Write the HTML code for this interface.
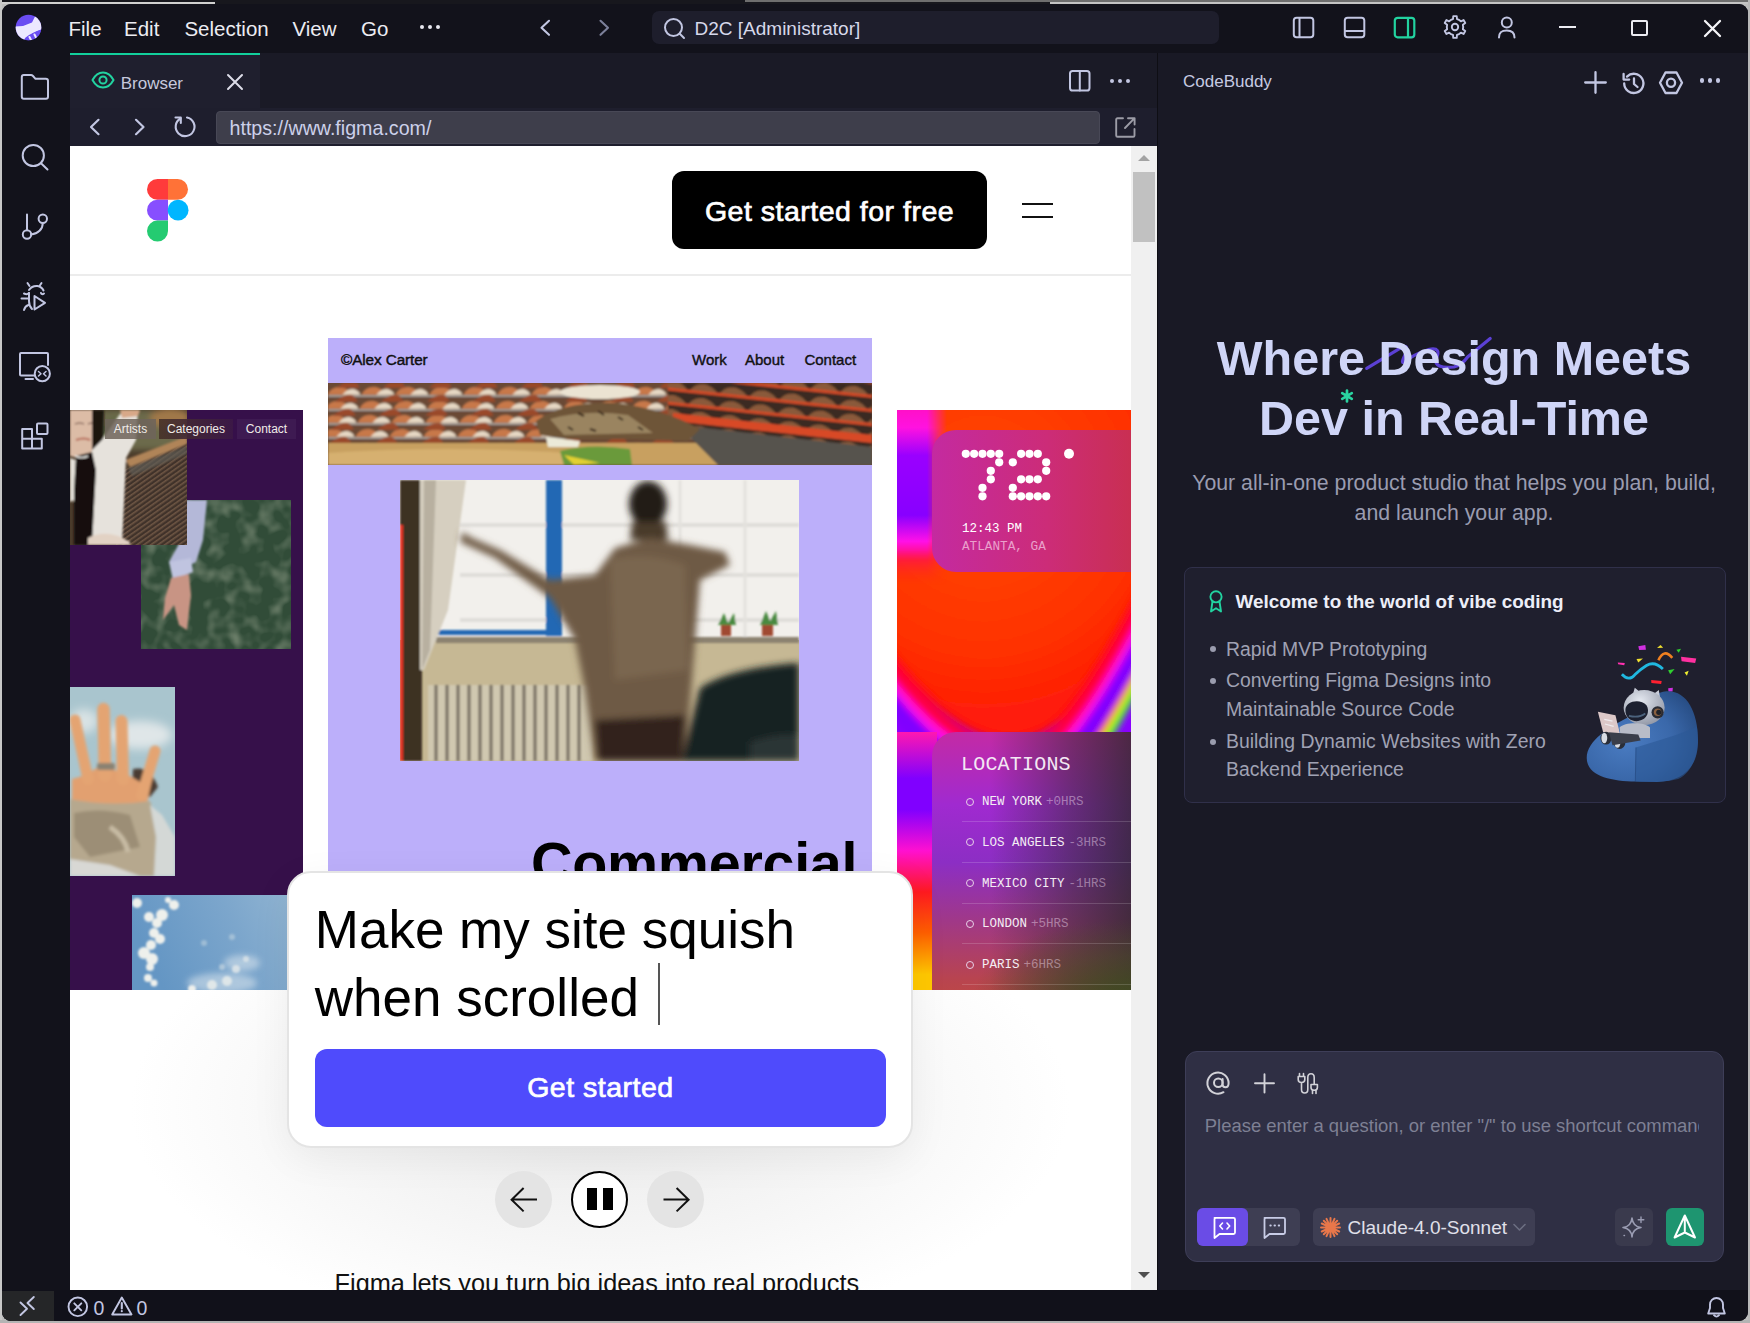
<!DOCTYPE html>
<html><head><meta charset="utf-8">
<style>
*{margin:0;padding:0;box-sizing:border-box}
html,body{width:1750px;height:1323px;overflow:hidden;background:#bdbdbd;font-family:"Liberation Sans",sans-serif}
.a{position:absolute}
.t{white-space:pre;line-height:normal}
</style></head><body>
<div class="a" style="left:0;top:0;width:1750px;height:4px;background:#17171d"></div>
<div class="a" style="left:0;top:2px;width:215px;height:2px;background:#d0d0d0"></div>
<div class="a" style="left:745px;top:0;width:1005px;height:2px;background:#6e6e6e"></div>
<div class="a" style="left:1050px;top:2px;width:700px;height:2px;background:#c4c4c4"></div>
<div class="a" style="left:0;top:0;width:2px;height:1323px;background:#c8c8c8"></div>
<div class="a" style="left:1748px;top:0;width:2px;height:1323px;background:#b8b8b8"></div>
<div class="a" style="left:0;top:1320px;width:1750px;height:3px;background:#b4b4b4"></div>
<div class="a" style="left:2px;top:4px;width:1746px;height:1316.5px;border-radius:9px;overflow:hidden;background:#12121b">
<div class="a" style="left:-2px;top:-4px;width:1750px;height:1323px">
<div class="a" style="left:0;top:0;width:1750px;height:53px;background:#12121b"></div><svg class="a" style="left:15px;top:14px" width="28" height="28" viewBox="0 0 28 28">
    <defs><clipPath id="lc"><circle cx="13.5" cy="13.5" r="12.8"/></clipPath></defs>
    <circle cx="13.5" cy="13.5" r="12.8" fill="#6a4cf2"/>
    <g clip-path="url(#lc)">
      <path d="M-2 12.5 L8 12 L17 8.5 L20 2.5 L30 6 L30 14 L22 17 L14 21 L10 24 L8 30 L-2 30Z" fill="#ece8ff"/>
      <path d="M9 30 L11 24 L18 19 L30 14 L30 30Z" fill="#6a4cf2"/>
      <path d="M14.5 23 L16 26 M19.5 20.5 L21 23.5" stroke="#ece8ff" stroke-width="2" stroke-linecap="round"/>
    </g></svg><div class="a t" style="left:68.50px;top:16.74px;font-size:20.5px;color:#ececf2;">File</div><div class="a t" style="left:124.00px;top:16.74px;font-size:20.5px;color:#ececf2;">Edit</div><div class="a t" style="left:184.40px;top:16.74px;font-size:20.5px;color:#ececf2;">Selection</div><div class="a t" style="left:292.40px;top:16.74px;font-size:20.5px;color:#ececf2;">View</div><div class="a t" style="left:361.00px;top:16.74px;font-size:20.5px;color:#ececf2;">Go</div><div class="a" style="left:420.30px;top:25.20px;width:4.2px;height:4.2px;border-radius:50%;background:#e8e8f0"></div><div class="a" style="left:428.30px;top:25.20px;width:4.2px;height:4.2px;border-radius:50%;background:#e8e8f0"></div><div class="a" style="left:436.30px;top:25.20px;width:4.2px;height:4.2px;border-radius:50%;background:#e8e8f0"></div><svg class="a" style="left:536px;top:18px;overflow:visible" width="18" height="20" fill="none" stroke="#c2c6e2" stroke-width="2.1" stroke-linecap="round" stroke-linejoin="round"><path d="M13 2.8 L5.5 9.8 L13 16.8"/></svg><svg class="a" style="left:596px;top:18px;overflow:visible" width="18" height="20" fill="none" stroke="#7c809a" stroke-width="2.1" stroke-linecap="round" stroke-linejoin="round"><path d="M4.5 2.8 L12 9.8 L4.5 16.8"/></svg><div class="a" style="left:652px;top:11px;width:567px;height:33px;background:#1e1e2c;border-radius:7px"></div><svg class="a" style="left:662px;top:16px;overflow:visible" width="26" height="26" fill="none" stroke="#c2c6e2" stroke-width="2" stroke-linecap="round" stroke-linejoin="round"><circle cx="11.5" cy="11.5" r="8.5"/><path d="M18 18 L22 22"/></svg><div class="a t" style="left:694.50px;top:17.52px;font-size:19px;color:#d6d8ea;">D2C [Administrator]</div><svg class="a" style="left:1292px;top:16px;overflow:visible" width="23" height="23" fill="none" stroke="#c2c6e2" stroke-width="2" stroke-linecap="round" stroke-linejoin="round"><rect x="1.8" y="1.8" width="19.5" height="19.5" rx="2.8"/><path d="M7.5 2 V21"/></svg><svg class="a" style="left:1343px;top:16px;overflow:visible" width="23" height="23" fill="none" stroke="#c2c6e2" stroke-width="2" stroke-linecap="round" stroke-linejoin="round"><rect x="1.8" y="1.8" width="19.5" height="19.5" rx="2.8"/><path d="M2 15 H21"/></svg><svg class="a" style="left:1393px;top:16px;overflow:visible" width="23" height="23" fill="none" stroke="#22d3a0" stroke-width="2.2" stroke-linecap="round" stroke-linejoin="round"><rect x="1.8" y="1.8" width="19.5" height="19.5" rx="2.8"/><path d="M15 2 V21"/></svg><svg class="a" style="left:1444px;top:16.4px;overflow:visible" width="22" height="22" fill="none" stroke="#c2c6e2" stroke-width="1.9" stroke-linecap="round" stroke-linejoin="round"><path d="M6.90 3.90 L9.02 3.04 L9.28 0.14 L12.72 0.14 L12.98 3.04 L15.10 3.90 L16.90 5.30 L19.55 4.08 L21.27 7.06 L18.88 8.74 L19.20 11.00 L18.88 13.26 L21.27 14.94 L19.55 17.92 L16.90 16.70 L15.10 18.10 L12.98 18.96 L12.72 21.86 L9.28 21.86 L9.02 18.96 L6.90 18.10 L5.10 16.70 L2.45 17.92 L0.73 14.94 L3.12 13.26 L2.80 11.00 L3.12 8.74 L0.73 7.06 L2.45 4.08 L5.10 5.30Z"/><circle cx="11" cy="11" r="3.2"/></svg><svg class="a" style="left:1497px;top:16px;overflow:visible" width="20" height="23" fill="none" stroke="#c2c6e2" stroke-width="2" stroke-linecap="round" stroke-linejoin="round"><circle cx="9.8" cy="6.4" r="5"/><path d="M2 21.5 C2 15.5 5.5 14.5 9.8 14.5 C14 14.5 17.5 15.5 17.5 21.5"/></svg><div class="a" style="left:1559px;top:26px;width:16.5px;height:2px;background:#ececf2"></div><div class="a" style="left:1631px;top:19.5px;width:17px;height:16.5px;border:2px solid #ececf2;border-radius:2px"></div><svg class="a" style="left:1704px;top:19.5px;overflow:visible" width="17" height="17" fill="none" stroke="#f4f4f8" stroke-width="2.3" stroke-linecap="round" stroke-linejoin="round"><path d="M1 1 L16 16 M16 1 L1 16"/></svg><div class="a" style="left:0;top:53px;width:70px;height:1237px;background:#12121b"></div><svg class="a" style="left:20px;top:73px;overflow:visible" width="30" height="28" fill="none" stroke="#c2c6e2" stroke-width="2" stroke-linecap="round" stroke-linejoin="round"><path d="M1.8 4 Q1.8 2 3.8 2 H11 Q12 2 13 3 L15.5 5.8 H25.8 Q28 5.8 28 8 V23.8 Q28 25.8 26 25.8 H3.8 Q1.8 25.8 1.8 23.8Z"/></svg><svg class="a" style="left:21px;top:143px;overflow:visible" width="30" height="30" fill="none" stroke="#c2c6e2" stroke-width="2" stroke-linecap="round" stroke-linejoin="round"><circle cx="12.3" cy="12.5" r="10.6"/><path d="M20 20.3 L26.5 26.5"/></svg><svg class="a" style="left:20px;top:213px;overflow:visible" width="28" height="28" fill="none" stroke="#c2c6e2" stroke-width="2" stroke-linecap="round" stroke-linejoin="round"><circle cx="7" cy="21.5" r="4.2"/><circle cx="22.8" cy="5.7" r="4.2"/><path d="M7 1.4 V17.3 M22.8 9.9 C22.8 16 18 21 11.2 21.5"/></svg><svg class="a" style="left:20px;top:281px;overflow:visible" width="30" height="31" fill="none" stroke="#c2c6e2" stroke-width="2" stroke-linecap="round" stroke-linejoin="round"><path d="M9 9 Q12 4.5 17.5 5 Q22 6 23.5 9.5"/><path d="M9.5 5 L7.5 2 M19.5 5 L21.5 2"/><path d="M4 12.5 Q7 14 9 12 M24 12.5 Q22 14 21 12"/><path d="M9 12 V20 Q9 25 12 28"/><path d="M1.5 17.5 H9 M4 29 Q5 25 8.5 24"/><path d="M14.5 15 L25 21.8 L14.5 28.5Z"/></svg><svg class="a" style="left:19px;top:352px;overflow:visible" width="32" height="30" fill="none" stroke="#c2c6e2" stroke-width="2" stroke-linecap="round" stroke-linejoin="round"><path d="M16 23.5 H2 Q1 23.5 1 22.5 V2 Q1 1 2 1 H28 Q29 1 29 2 V13"/><path d="M6.5 27 H14"/><circle cx="23.3" cy="21.7" r="7.6"/><path d="M19.5 19.5 L22 21.7 L19.5 24 M27 19.5 L24.5 21.7 L27 24" stroke-width="1.5"/></svg><svg class="a" style="left:21px;top:422px;overflow:visible" width="28" height="28" fill="none" stroke="#c2c6e2" stroke-width="2" stroke-linecap="round" stroke-linejoin="round"><path d="M1.2 7 H11 V16.8 H1.2Z M1.2 16.8 H11 V26.6 H1.2Z M11 16.8 H20.8 V26.6 H11Z"/><rect x="16" y="1.4" width="10.5" height="10.5" rx="1"/></svg><div class="a" style="left:70px;top:53px;width:1087px;height:55px;background:#1a1a26"></div><div class="a" style="left:70px;top:53px;width:190px;height:55px;background:#1f1f2e"></div><div class="a" style="left:70px;top:53px;width:190px;height:2px;background:#12d09c"></div><svg class="a" style="left:91px;top:71px;overflow:visible" width="25" height="19" fill="none" stroke="#22d3a0" stroke-width="2" stroke-linecap="round" stroke-linejoin="round"><path d="M1.5 9 C4.5 3.5 8 1.5 12 1.5 C16 1.5 19.5 3.5 22.5 9 C19.5 14.5 16 16.5 12 16.5 C8 16.5 4.5 14.5 1.5 9Z"/><circle cx="12" cy="9" r="3.6"/></svg><div class="a t" style="left:120.70px;top:74.16px;font-size:17px;color:#c6c8dc;">Browser</div><svg class="a" style="left:227px;top:73.5px;overflow:visible" width="16" height="16" fill="none" stroke="#dcdce8" stroke-width="2" stroke-linecap="round" stroke-linejoin="round"><path d="M1 1 L15 15 M15 1 L1 15"/></svg><svg class="a" style="left:1069px;top:69.5px;overflow:visible" width="22" height="22" fill="none" stroke="#c2c6e2" stroke-width="2" stroke-linecap="round" stroke-linejoin="round"><rect x="1" y="1" width="19.5" height="19.5" rx="2.6"/><path d="M10.8 1.2 V20.5"/></svg><div class="a" style="left:1110.30px;top:78.60px;width:4.2px;height:4.2px;border-radius:50%;background:#c2c6e2"></div><div class="a" style="left:1118.15px;top:78.60px;width:4.2px;height:4.2px;border-radius:50%;background:#c2c6e2"></div><div class="a" style="left:1126.00px;top:78.60px;width:4.2px;height:4.2px;border-radius:50%;background:#c2c6e2"></div><div class="a" style="left:70px;top:108px;width:1087px;height:38px;background:#1e1e2d"></div><svg class="a" style="left:89px;top:118px;overflow:visible" width="12" height="18" fill="none" stroke="#c2c6e2" stroke-width="2.2" stroke-linecap="round" stroke-linejoin="round"><path d="M9.5 1.8 L2 9 L9.5 16.2"/></svg><svg class="a" style="left:134px;top:118px;overflow:visible" width="12" height="18" fill="none" stroke="#c2c6e2" stroke-width="2.2" stroke-linecap="round" stroke-linejoin="round"><path d="M2 1.8 L9.5 9 L2 16.2"/></svg><svg class="a" style="left:173px;top:116px;overflow:visible" width="22" height="22" fill="none" stroke="#c2c6e2" stroke-width="2.1" stroke-linecap="round" stroke-linejoin="round"><path d="M7.5 2.5 A9.4 9.4 0 1 0 14 1.5"/><path d="M2.5 1.5 H7.8 V7"/></svg><div class="a" style="left:215.5px;top:110.8px;width:884px;height:33px;background:#3e3e4b;border:1px solid #484856;border-radius:4px"></div><div class="a t" style="left:229.50px;top:116.82px;font-size:19.65px;color:#ccd0ea;">https://www.figma.com/</div><svg class="a" style="left:1115px;top:116.5px;overflow:visible" width="21" height="21" fill="none" stroke="#9c9ca6" stroke-width="1.9" stroke-linecap="round" stroke-linejoin="round"><path d="M8 1.3 H2.5 Q1.2 1.3 1.2 2.6 V18.5 Q1.2 19.8 2.5 19.8 H18.2 Q19.5 19.8 19.5 18.5 V12"/><path d="M10 11 L19.6 1.2 M13 1.2 H19.6 V7.5"/></svg><div id="web" class="a" style="left:70px;top:146px;width:1061px;height:1144px;background:#fff;overflow:hidden">
  <div class="a" style="left:0;top:0;width:1061px;height:1144px;background:radial-gradient(ellipse 470px 230px at 530px 960px,#e9e9e9 0%,#f3f3f3 45%,#ffffff 100%)"></div>
  <svg class="a" style="left:77px;top:33px" width="42" height="63" viewBox="0 0 42 63">
    <path d="M0 10.4A10.4 10.4 0 0 1 10.4 0H21V20.8H10.4A10.4 10.4 0 0 1 0 10.4Z" fill="#ff3b3b"/>
    <path d="M21 0H30.6A10.4 10.4 0 0 1 30.6 20.8H21Z" fill="#ff7237"/>
    <path d="M0 31.2A10.4 10.4 0 0 1 10.4 20.8H21V41.6H10.4A10.4 10.4 0 0 1 0 31.2Z" fill="#874fff"/>
    <circle cx="31.1" cy="31.2" r="10.4" fill="#00b6ff"/>
    <path d="M0 52A10.4 10.4 0 0 1 10.4 41.6H21V52A10.4 10.4 0 0 1 0 52Z" fill="#24cb71"/>
  </svg>
  <div class="a" style="left:602px;top:25px;width:315px;height:78px;background:#000;border-radius:12px"></div>
  <div class="a t" style="left:602.00px;top:48.78px;font-size:28.5px;color:#fff;width:315px;text-align:center;-webkit-text-stroke:0.7px #fff;letter-spacing:0.5px">Get started for free</div>
  <div class="a" style="left:952px;top:57px;width:31px;height:2px;background:#111"></div>
  <div class="a" style="left:952px;top:70px;width:31px;height:2px;background:#111"></div>
  <div class="a" style="left:0;top:128px;width:1061px;height:2px;background:#ececec"></div>

  <div class="a" style="left:0;top:264px;width:233px;height:580px;background:#36104a"></div>
  <svg class="a" style="left:71px;top:354px" width="150" height="149" viewBox="0 0 150 149">
<defs><filter id="bwa" x="0" y="0" width="100%" height="100%"><feTurbulence type="fractalNoise" baseFrequency="0.06" numOctaves="2" seed="3" result="n"/><feColorMatrix in="n" type="matrix" values="0 0 0 0 0.45  0 0 0 0 0.50  0 0 0 0 0.38  0 0 0 1.1 -0.5" result="c"/><feComposite in="c" in2="SourceGraphic" operator="in"/></filter>
<filter id="bwb"><feGaussianBlur stdDeviation="1.2"/></filter></defs>
<rect width="150" height="149" fill="#314c38"/>
<rect width="150" height="149" fill="#000" filter="url(#bwa)"/>
<g filter="url(#bwb)">
<path d="M45 0 L66 0 L62 40 L55 62 L35 72 L28 62 L40 40Z" fill="#b4b8d8"/>
<path d="M28 62 L50 58 L52 72 L32 80Z" fill="#c0c4e0"/>
<path d="M30 78 L48 74 L50 95 L46 130 L38 125 L33 105 L22 120 L24 98Z" fill="#c89484"/>
</g></svg><svg class="a" style="left:0;top:264px" width="117" height="135" viewBox="0 0 117 135">
<defs><filter id="bw" x="-10%" y="-10%" width="120%" height="120%"><feGaussianBlur stdDeviation="1.1"/></filter>
<filter id="bw3" x="-20%" y="-20%" width="140%" height="140%"><feGaussianBlur stdDeviation="3"/></filter>
<pattern id="grate" width="4" height="4" patternUnits="userSpaceOnUse" patternTransform="rotate(-35)"><rect width="4" height="4" fill="#40322a"/><rect width="4" height="1.6" fill="#6e5644"/></pattern><filter id="bw4"><feGaussianBlur stdDeviation="0.5"/></filter></defs>
<rect width="117" height="135" fill="#4a3a2a"/>
<g filter="url(#bw3)"><rect x="20" y="0" width="97" height="40" fill="#6c6a4c"/><ellipse cx="100" cy="8" rx="20" ry="10" fill="#a07848"/><ellipse cx="50" cy="20" rx="20" ry="12" fill="#5a6440"/></g>
<path d="M46 135 L50 62 L117 30 L117 135Z" fill="url(#grate)" filter="url(#bw4)"/>
<g filter="url(#bw)">
<path d="M55 50 L117 26 L117 34 L60 57Z" fill="#b08458"/>
<path d="M58 58 L117 36 L117 44 L62 66Z" fill="#5e5c54" opacity=".7"/>
<path d="M0 0 H27 V42 Q20 50 8 48 L0 46Z" fill="#dcbca6"/>
<path d="M6 30 Q14 27 20 30" stroke="#b86a58" stroke-width="2.2" fill="none"/>
<path d="M5 14 Q10 12 14 14 M18 14 Q22 12 26 14" stroke="#6a4a40" stroke-width="1.2" fill="none"/>
<path d="M22 0 L34 0 L33 40 L22 44Z" fill="#1a1410"/>
<path d="M0 48 L6 50 L5 90 L0 92Z" fill="#e4e0d8"/>
<path d="M22 40 L32 30 L50 4 L68 0 L66 30 L56 48 L52 135 L18 135Z" fill="#e6e2dc"/>
<path d="M50 0 L70 0 L68 6 L52 8Z" fill="#d8a888"/>
<path d="M6 46 L22 42 L26 60 L22 135 L4 135 L4 80Z" fill="#16110e"/>
<path d="M5 46 Q12 49 18 46" stroke="#f2f2ee" stroke-width="1.5" fill="none"/>
<path d="M18 128 Q38 118 60 132 L60 135 L18 135Z" fill="#e2d2c4"/>
</g></svg>
  <div class="a" style="left:35px;top:273px;width:51px;height:20px;background:rgba(110,100,90,.85)"></div>
  <div class="a" style="left:89px;top:273px;width:74px;height:20px;background:linear-gradient(90deg,rgba(70,50,40,.9),rgba(60,25,70,.9))"></div>
  <div class="a" style="left:167px;top:273px;width:59px;height:20px;background:#3e1a52"></div>
  <div class="a" style="left:35px;top:273px;width:51px;height:20px;color:#f0ece8;font-size:12px;line-height:20px;text-align:center">Artists</div>
  <div class="a" style="left:89px;top:273px;width:74px;height:20px;color:#f0ece8;font-size:12px;line-height:20px;text-align:center">Categories</div>
  <div class="a" style="left:167px;top:273px;width:59px;height:20px;color:#f0ece8;font-size:12px;line-height:20px;text-align:center">Contact</div>
  <svg class="a" style="left:0;top:541px" width="105" height="189" viewBox="0 0 105 189">
<defs><filter id="bh" x="-10%" y="-10%" width="120%" height="120%"><feGaussianBlur stdDeviation="1.4"/></filter>
<filter id="bh2" x="-20%" y="-20%" width="140%" height="140%"><feGaussianBlur stdDeviation="5"/></filter></defs>
<rect width="105" height="189" fill="#a9c5ce"/>
<g filter="url(#bh2)"><ellipse cx="70" cy="48" rx="32" ry="14" fill="#dfe6e8"/><ellipse cx="14" cy="34" rx="14" ry="12" fill="#d8e2e4"/></g>
<g filter="url(#bh)">
<path d="M63 82 Q80 78 88 100 L80 110 L62 104Z" fill="#4a3a30"/>
<path d="M2 92 L16 88 L28 80 L42 82 L58 88 L72 96 L82 92 L76 122 L40 130 L2 125Z" fill="#e2a070"/>
<g stroke="#e4a472" stroke-linecap="round" fill="none">
<path d="M5 33 L18 92" stroke-width="11"/>
<path d="M33.5 22 L35 88" stroke-width="12.5"/>
<path d="M51.5 34 L53 92" stroke-width="12"/>
<path d="M85 64 L72 108" stroke-width="11"/>
</g>

<rect x="27" y="76" width="18" height="7" rx="2" fill="#8a8272"/>
<path d="M0 112 Q40 120 80 114 L92 150 L94 189 L0 189Z" fill="#b6a88e"/>
<path d="M4 126 Q30 120 60 128 L70 160 L20 170 L4 150Z" fill="#9c8e76"/>
<path d="M40 140 Q55 150 58 165" stroke="#c8bca4" stroke-width="5" fill="none"/>
<path d="M80 118 L92 128 L105 150 L105 189 L84 189 L86 150Z" fill="#d4d8d6"/>
<path d="M0 172 L40 178 L70 189 L0 189Z" fill="#d8d8d4"/>
</g></svg><svg class="a" style="left:62px;top:749px" width="156" height="95" viewBox="0 0 156 95">
<defs><filter id="bs" x="-10%" y="-10%" width="120%" height="120%"><feGaussianBlur stdDeviation="1.3"/></filter>
<filter id="bs2" x="-30%" y="-30%" width="160%" height="160%"><feGaussianBlur stdDeviation="3"/></filter>
<linearGradient id="skyg" x1="0" y1="0.3" x2="1" y2="0"><stop offset="0" stop-color="#6496c4"/><stop offset="0.6" stop-color="#7ca6cc"/><stop offset="1" stop-color="#90b4d2"/></linearGradient></defs>
<rect width="156" height="95" fill="url(#skyg)"/>
<g filter="url(#bs2)" fill="#dce6ee" opacity=".55"><ellipse cx="90" cy="88" rx="35" ry="10"/><ellipse cx="110" cy="68" rx="18" ry="8"/></g>
<g filter="url(#bs)" fill="#eef0ec">
<circle cx="5" cy="8" r="5"/><circle cx="42" cy="10" r="5"/><circle cx="36" cy="5" r="3"/>
<circle cx="17" cy="22" r="5"/><circle cx="30" cy="20" r="6"/><circle cx="25" cy="28" r="5"/>
<circle cx="22" cy="38" r="5"/><circle cx="28" cy="44" r="5"/><circle cx="19" cy="50" r="5"/>
<circle cx="12" cy="58" r="6"/><circle cx="20" cy="64" r="6"/><circle cx="18" cy="72" r="4"/>
<circle cx="16" cy="83" r="4"/><circle cx="22" cy="88" r="3.5"/>
<circle cx="60" cy="94" r="4"/><circle cx="80" cy="90" r="5" opacity=".8"/><circle cx="95" cy="86" r="5" opacity=".75"/><circle cx="104" cy="74" r="4" opacity=".7"/><circle cx="114" cy="64" r="3" opacity=".6"/><circle cx="90" cy="72" r="3" opacity=".45"/><circle cx="72" cy="48" r="3" opacity=".35"/><circle cx="100" cy="42" r="3" opacity=".35"/>
</g></svg>
  <div class="a" style="left:258px;top:192px;width:544px;height:540px;background:#bcaffa"></div>
  <div class="a t" style="left:271.00px;top:205.22px;font-size:15.3px;color:#111;-webkit-text-stroke:0.45px #111;letter-spacing:-0.1px">&copy;Alex Carter</div>
  <div class="a t" style="left:622.00px;top:205.00px;font-size:15px;color:#111;-webkit-text-stroke:0.4px #111">Work</div>
  <div class="a t" style="left:675.00px;top:205.00px;font-size:15px;color:#111;-webkit-text-stroke:0.4px #111">About</div>
  <div class="a t" style="left:734.40px;top:205.00px;font-size:15px;color:#111;-webkit-text-stroke:0.4px #111">Contact</div>
  <svg class="a" style="left:258px;top:237px" width="544" height="82" viewBox="0 0 544 82">
<defs><filter id="bsh"><feGaussianBlur stdDeviation="0.8"/></filter>
<pattern id="shoe" width="34" height="14" patternUnits="userSpaceOnUse" patternTransform="skewX(-8)">
<rect width="34" height="14" fill="#6a4a34"/>
<path d="M1 12 Q4 3 14 4 Q22 6 26 12Z" fill="#c8784a"/>
<path d="M16 12 Q20 5 27 6 Q33 8 34 12Z" fill="#e6d8c4"/>
<rect y="12" width="34" height="2" fill="#a09a94"/>
</pattern>
<pattern id="shoe2" width="46" height="14" patternUnits="userSpaceOnUse" patternTransform="translate(9 7) skewX(-8)">
<path d="M0 12 Q6 4 15 5 Q20 7 22 12Z" fill="#9a4a2c"/>
</pattern>
<pattern id="shoeR" width="30" height="14" patternUnits="userSpaceOnUse" patternTransform="rotate(6)">
<rect width="30" height="14" fill="#3a2a22"/>
<path d="M1 11 Q6 3 16 4 Q24 6 28 11Z" fill="#8a5a3a"/>
<rect y="11" width="30" height="3" fill="#d04a28"/>
</pattern></defs>
<rect width="544" height="82" fill="#6a4a34"/>
<g filter="url(#bsh)">
<rect width="544" height="62" fill="url(#shoe)"/>
<rect width="544" height="62" fill="url(#shoe2)"/>
<path d="M0 60 L544 60 L544 82 L0 82Z" fill="#c8a060"/>
<path d="M0 70 Q120 62 240 70 L250 82 L0 82Z" fill="#d6b070"/>
<path d="M340 0 L544 0 L544 70 L340 40Z" fill="url(#shoeR)"/>
<path d="M345 30 L544 52 L544 60 L345 38Z" fill="#d84a28"/>
<path d="M350 42 L544 64 L544 82 L390 82Z" fill="#56524e"/>
<ellipse cx="272" cy="9" rx="40" ry="7" fill="#ebe3d2"/>
<path d="M208 38 Q236 18 288 20 Q336 26 372 46 L360 58 L300 56 L240 56 L212 52Z" fill="#6e5438"/>
<path d="M222 36 Q258 26 300 32 L325 50 L236 52Z" fill="#9a8460"/>
<path d="M250 30 l6 3 M270 28 l6 4 M290 34 l5 3 M240 44 l5 3 M310 44 l5 3 M262 46 l6 2" stroke="#3a2a1a" stroke-width="2"/>
<path d="M218 54 L252 58 L250 64 L220 64Z" fill="#ecead8"/>
<path d="M232 68 Q262 60 302 66 L304 82 L236 82Z" fill="#6a9a3a"/>
<path d="M236 72 L272 80 L246 82Z" fill="#e2d030"/>
</g></svg><svg class="a" style="left:330px;top:334px" width="399" height="281" viewBox="0 0 399 281">
<defs><filter id="bm" x="-5%" y="-5%" width="110%" height="110%"><feGaussianBlur stdDeviation="3.5"/></filter>
<filter id="bm2"><feGaussianBlur stdDeviation="1.2"/></filter></defs>
<rect width="399" height="281" fill="#c6b894"/>
<rect width="399" height="160" fill="#f2f0ec"/>
<g filter="url(#bm2)">
<path d="M60 45 H399 M60 95 H399 M60 140 H399" stroke="#e0deda" stroke-width="4"/>
<path d="M280 0 V160 M345 0 V160" stroke="#e4e2de" stroke-width="3"/>
<rect x="146" y="0" width="16" height="156" fill="#2068b4"/>
<rect x="36" y="150" width="126" height="5" fill="#2068b4"/>
<rect x="36" y="157" width="363" height="6" fill="#8c8270"/>
<rect x="0" y="0" width="22" height="281" fill="#3e3224"/>
<path d="M20 0 L66 0 L48 130 L24 190 L20 190Z" fill="#d6cfc0"/>
<path d="M24 0 L36 0 L30 170 L22 190Z" fill="#b8b0a0"/>
<rect x="0" y="45" width="3" height="236" fill="#e83020"/>
<rect x="28" y="205" width="165" height="76" fill="#d0c8b0"/>
<path d="M36 205 V281 M47 205 V281 M58 205 V281 M69 205 V281 M80 205 V281 M91 205 V281 M102 205 V281 M113 205 V281 M124 205 V281 M135 205 V281 M146 205 V281 M157 205 V281 M168 205 V281 M179 205 V281" stroke="#80786a" stroke-width="3.5"/>
<path d="M318 145 l6 -12 l4 10 l6 -10 l2 12Z" fill="#4a8a40"/><rect x="321" y="145" width="10" height="11" fill="#a04a30"/>
<path d="M360 145 l6 -14 l4 10 l6 -10 l2 14Z" fill="#4a8a40"/><rect x="362" y="145" width="11" height="11" fill="#a04a30"/>
</g>
<g filter="url(#bm)">
<ellipse cx="248" cy="24" rx="19" ry="23" fill="#201a16"/>
<path d="M232 42 L266 42 L268 60 L230 60Z" fill="#4a3a2c"/>
<path d="M62 52 L72 58 L100 70 L150 100 L195 95 L215 68 L250 58 L290 65 L325 72 L330 85 L300 100 L292 200 L285 281 L195 281 L185 210 L175 160 L150 118 L95 78 L60 62Z" fill="#6e5a44"/>
<path d="M210 80 Q245 70 285 85 L288 190 L215 200Z" fill="#7a6650"/>
<path d="M195 240 L285 235 L282 281 L198 281Z" fill="#32241a"/>
<path d="M300 208 Q330 188 399 183 L399 281 L282 281 Q292 240 300 208Z" fill="#182020"/>
<path d="M350 262 Q380 252 399 256 L399 281 L350 281Z" fill="#2c3434"/>
</g></svg>
  <div class="a t" style="left:461.00px;top:684.10px;font-size:57.5px;color:#000;font-weight:bold;letter-spacing:-0.3px">Commercial</div>
  <div class="a" style="left:827px;top:264px;width:234px;height:580px;overflow:hidden">
<svg class="a" style="left:0;top:0" width="234" height="580" viewBox="0 0 234 580">
<defs><filter id="bg1" x="-30%" y="-30%" width="160%" height="160%"><feGaussianBlur stdDeviation="3.5"/></filter>
<radialGradient id="core" cx="0.45" cy="0.35" r="0.6"><stop offset="0" stop-color="#ff4a00"/><stop offset="0.7" stop-color="#ff3200"/><stop offset="1" stop-color="#ff1c08"/></radialGradient></defs>
<rect width="234" height="580" fill="#8a00ff"/>
<g filter="url(#bg1)"><path d="M 120 330 C 140 328, 150 320, 165 305 C 195 270, 222 220, 290 90" transform="translate(0 84)" stroke="#30ff30" stroke-width="14" fill="none"/><path d="M 120 330 C 140 328, 150 320, 165 305 C 195 270, 222 220, 290 90" transform="translate(0 74)" stroke="#ffd000" stroke-width="10" fill="none"/><path d="M 120 330 C 140 328, 150 320, 165 305 C 195 270, 222 220, 290 90" transform="translate(0 64)" stroke="#ff2020" stroke-width="12" fill="none"/><path d="M -80 120 C -30 220, 30 300, 85 322 C 115 332, 140 328, 165 305 C 195 270, 222 220, 290 90" transform="translate(0 44)" stroke="#8000ff" stroke-width="26" fill="none"/><path d="M -80 120 C -30 220, 30 300, 85 322 C 115 332, 140 328, 165 305 C 195 270, 222 220, 290 90" transform="translate(0 26)" stroke="#ff10e0" stroke-width="14" fill="none"/><path d="M -80 120 C -30 220, 30 300, 85 322 C 115 332, 140 328, 165 305 C 195 270, 222 220, 290 90" transform="translate(0 14)" stroke="#ff0040" stroke-width="12" fill="none"/><path d="M -80 120 C -30 220, 30 300, 85 322 C 115 332, 140 328, 165 305 C 195 270, 222 220, 290 90 L 290 -50 L -80 -50 Z" fill="url(#core)"/><path d="M -80 120 C -30 220, 30 300, 85 322 C 115 332, 140 328, 165 305 C 195 270, 222 220, 290 90" stroke="#ff0a10" stroke-width="7" fill="none"/></g></svg>
<div class="a" style="left:0;top:0;width:50px;height:175px;background:linear-gradient(180deg,#ff10c8 0%,#ff12e0 10%,#9a00ff 26%,#8800ff 60%,#ff10e8 75%,#ff1050 86%,#ff2a10 100%);-webkit-mask-image:linear-gradient(180deg,#000 80%,transparent 100%),linear-gradient(90deg,#000 60%,transparent 100%);-webkit-mask-composite:source-in;mask-composite:intersect"></div>
<div class="a" style="left:0;top:322px;width:40px;height:258px;background:linear-gradient(180deg,#ff18b0 0%,#8000ff 18%,#8000ff 30%,#ff10d0 46%,#ff1a20 62%,#ff6000 78%,#ffc800 94%)"></div>
<div class="a" style="left:35px;top:20px;width:230px;height:142px;border-radius:24px;background:linear-gradient(90deg,#c42aa0 0%,#cc2c78 50%,#c83044 100%)"></div>
<div class="a" style="left:35px;top:322px;width:230px;height:290px;border-radius:24px;background:linear-gradient(180deg,#c42aa4 0%,#a02ad0 25%,#8c2ec4 45%,#a03888 65%,#b84450 85%,#c24c38 100%)"></div>
<div class="a" style="left:35px;top:322px;width:230px;height:290px;border-radius:24px;background:linear-gradient(90deg,rgba(40,40,40,0) 25%,rgba(50,42,48,.5) 60%,rgba(40,38,38,.92) 100%)"></div>
<div class="a" style="left:35px;top:480px;width:230px;height:110px;background:radial-gradient(ellipse 150px 80px at 190px 110px,rgba(60,80,30,.85) 0%,rgba(70,80,40,.45) 55%,rgba(60,60,30,0) 100%)"></div>
</div><svg class="a" style="left:827px;top:264px" width="234" height="120" fill="#fff"><circle cx="68.8" cy="43.8" r="4.1"/><circle cx="77.1" cy="43.8" r="4.1"/><circle cx="85.5" cy="43.8" r="4.1"/><circle cx="93.8" cy="43.8" r="4.1"/><circle cx="102.2" cy="43.8" r="4.1"/><circle cx="102.2" cy="52.3" r="4.1"/><circle cx="93.8" cy="60.8" r="4.1"/><circle cx="93.8" cy="69.3" r="4.1"/><circle cx="85.5" cy="77.8" r="4.1"/><circle cx="85.5" cy="86.3" r="4.1"/><circle cx="124.1" cy="43.8" r="4.1"/><circle cx="132.5" cy="43.8" r="4.1"/><circle cx="140.8" cy="43.8" r="4.1"/><circle cx="115.8" cy="52.3" r="4.1"/><circle cx="149.2" cy="52.3" r="4.1"/><circle cx="149.2" cy="60.8" r="4.1"/><circle cx="124.1" cy="69.3" r="4.1"/><circle cx="132.5" cy="69.3" r="4.1"/><circle cx="140.8" cy="69.3" r="4.1"/><circle cx="115.8" cy="77.8" r="4.1"/><circle cx="115.8" cy="86.3" r="4.1"/><circle cx="124.1" cy="86.3" r="4.1"/><circle cx="132.5" cy="86.3" r="4.1"/><circle cx="140.8" cy="86.3" r="4.1"/><circle cx="149.2" cy="86.3" r="4.1"/><circle cx="172" cy="43.80000000000001" r="5"/></svg>
<div class="a" style="left:892px;top:376px;font-size:12.5px;font-family:'Liberation Mono',monospace;color:#fff;line-height:14px">12:43 PM</div>
<div class="a" style="left:892px;top:394px;font-size:12.7px;font-family:'Liberation Mono',monospace;color:#eaa0cc;line-height:14px">ATLANTA, GA</div>
<div class="a" style="left:891px;top:609px;font-size:20px;font-family:'Liberation Mono',monospace;color:#f4e8f4;line-height:20px;letter-spacing:0.2px">LOCATIONS</div>
<div class="a" style="left:895.5px;top:651.5px;width:8px;height:8px;border-radius:50%;border:1.3px solid #e8d0e8"></div><div class="a" style="left:912px;top:649.0px;font-size:12.5px;font-family:'Liberation Mono',monospace;color:#f4eef4;line-height:14px;white-space:pre">NEW YORK<span style="color:rgba(255,235,255,.42);margin-left:4px">+0HRS</span></div><div class="a" style="left:892px;top:675.0px;width:170px;height:1px;background:rgba(255,255,255,.16)"></div><div class="a" style="left:895.5px;top:692.3px;width:8px;height:8px;border-radius:50%;border:1.3px solid #e8d0e8"></div><div class="a" style="left:912px;top:689.8px;font-size:12.5px;font-family:'Liberation Mono',monospace;color:#f4eef4;line-height:14px;white-space:pre">LOS ANGELES<span style="color:rgba(255,235,255,.42);margin-left:4px">-3HRS</span></div><div class="a" style="left:892px;top:715.8px;width:170px;height:1px;background:rgba(255,255,255,.16)"></div><div class="a" style="left:895.5px;top:733.1px;width:8px;height:8px;border-radius:50%;border:1.3px solid #e8d0e8"></div><div class="a" style="left:912px;top:730.6px;font-size:12.5px;font-family:'Liberation Mono',monospace;color:#f4eef4;line-height:14px;white-space:pre">MEXICO CITY<span style="color:rgba(255,235,255,.42);margin-left:4px">-1HRS</span></div><div class="a" style="left:892px;top:756.6px;width:170px;height:1px;background:rgba(255,255,255,.16)"></div><div class="a" style="left:895.5px;top:773.9px;width:8px;height:8px;border-radius:50%;border:1.3px solid #e8d0e8"></div><div class="a" style="left:912px;top:771.4px;font-size:12.5px;font-family:'Liberation Mono',monospace;color:#f4eef4;line-height:14px;white-space:pre">LONDON<span style="color:rgba(255,235,255,.42);margin-left:4px">+5HRS</span></div><div class="a" style="left:892px;top:797.4px;width:170px;height:1px;background:rgba(255,255,255,.16)"></div><div class="a" style="left:895.5px;top:814.7px;width:8px;height:8px;border-radius:50%;border:1.3px solid #e8d0e8"></div><div class="a" style="left:912px;top:812.2px;font-size:12.5px;font-family:'Liberation Mono',monospace;color:#f4eef4;line-height:14px;white-space:pre">PARIS<span style="color:rgba(255,235,255,.42);margin-left:4px">+6HRS</span></div><div class="a" style="left:892px;top:838.2px;width:170px;height:1px;background:rgba(255,255,255,.16)"></div>
  <div class="a" style="left:217px;top:725px;width:626px;height:277px;background:#fff;border:2px solid #e4e4e4;border-radius:24px;box-shadow:0 10px 40px rgba(0,0,0,.06)"></div>
  <div class="a t" style="left:244.80px;top:752.64px;font-size:53px;color:#000;">Make my site squish</div><div class="a t" style="left:244.80px;top:820.64px;font-size:53px;color:#000;">when scrolled</div>
  <div class="a" style="left:588px;top:817px;width:2px;height:62px;background:#555"></div>
  <div class="a" style="left:245.2px;top:903.2px;width:570.4px;height:77.4px;background:#4f4bfc;border-radius:12px"></div><div class="a t" style="left:245.20px;top:925.08px;font-size:28.5px;color:#fff;width:570.4px;text-align:center;-webkit-text-stroke:0.7px #fff;letter-spacing:0.5px">Get started</div>
  <div class="a" style="left:425px;top:1025px;width:57px;height:57px;border-radius:50%;background:#e4e4e4"></div>
  <svg class="a" style="left:425px;top:1025px" width="57" height="57"><path d="M16.6 28.5 H42 M28.6 17 L16.6 28.8 L28.6 40.4" stroke="#111" stroke-width="2" fill="none"/></svg>
  <div class="a" style="left:501px;top:1025px;width:57px;height:57px;border-radius:50%;border:2px solid #000;background:#fff"></div>
  <div class="a" style="left:517.4px;top:1042.3px;width:10px;height:21.3px;background:#000"></div>
  <div class="a" style="left:533px;top:1042.3px;width:10px;height:21.3px;background:#000"></div>
  <div class="a" style="left:577px;top:1025px;width:57px;height:57px;border-radius:50%;background:#e4e4e4"></div>
  <svg class="a" style="left:577px;top:1025px" width="57" height="57"><path d="M16.5 28.5 H41.6 M29.6 17 L41.6 28.8 L29.6 40.4" stroke="#111" stroke-width="2" fill="none"/></svg>
  <div class="a t" style="left:264.60px;top:1123.22px;font-size:25.3px;color:#111;">Figma lets you turn big ideas into real products</div>
</div>
<div class="a" style="left:1131px;top:146px;width:26px;height:1144px;background:#f0f0f0"></div>
  <div class="a" style="left:1133px;top:172px;width:22px;height:70px;background:#c1c1c1"></div>
  <svg class="a" style="left:1137px;top:153px" width="14" height="10"><path d="M1 8 L7 2 L13 8Z" fill="#a3a3a3"/></svg>
  <svg class="a" style="left:1137px;top:1270px" width="14" height="10"><path d="M1 2 L7 8 L13 2Z" fill="#505050"/></svg>
  <div class="a" style="left:1157px;top:53px;width:1px;height:1237px;background:#0e0e14"></div><div class="a" style="left:1158px;top:53px;width:592px;height:1237px;background:#191925"></div><div class="a t" style="left:1183.00px;top:72.36px;font-size:17px;color:#c6cae2;">CodeBuddy</div><svg class="a" style="left:1583.5px;top:71px;overflow:visible" width="23" height="23" fill="none" stroke="#c2c6e2" stroke-width="2.3" stroke-linecap="round" stroke-linejoin="round"><path d="M11.5 1.2 V21.8 M1.2 11.5 H21.8"/></svg><svg class="a" style="left:1621px;top:72px;overflow:visible" width="25" height="23" fill="none" stroke="#c2c6e2" stroke-width="2.3" stroke-linecap="round" stroke-linejoin="round"><path d="M3.2 11.5 A9.6 9.6 0 1 0 6 4.6"/><path d="M2.6 2 V7.6 H8.2"/><path d="M13 6.5 V12 L16.5 15"/></svg><svg class="a" style="left:1659px;top:71px;overflow:visible" width="25" height="24" fill="none" stroke="#c2c6e2" stroke-width="2.3" stroke-linecap="round" stroke-linejoin="round"><path d="M6.5 1.5 H17.5 L23 11.7 L17.5 22 H6.5 L1 11.7Z"/><circle cx="12" cy="11.7" r="4.1"/></svg><div class="a" style="left:1700.10px;top:78.40px;width:4.2px;height:4.2px;border-radius:50%;background:#c2c6e2"></div><div class="a" style="left:1707.80px;top:78.40px;width:4.2px;height:4.2px;border-radius:50%;background:#c2c6e2"></div><div class="a" style="left:1715.50px;top:78.40px;width:4.2px;height:4.2px;border-radius:50%;background:#c2c6e2"></div><svg class="a" style="left:1350px;top:325px;overflow:visible" width="160" height="60"><path d="M16.7 43.4 L50.7 22.8 Q60 18 55 30 Q50 40 55 37 Q62 30 79.5 24.3 Q92 22 86 34 Q84 44 104 42 Q112 40 117.6 32 L140.2 13.5" stroke="#5b40d4" stroke-width="3.2" fill="none" stroke-linecap="round" stroke-linejoin="round"/></svg><div class="a t" style="left:1158.00px;top:330.08px;font-size:48.5px;color:#cfd5f7;width:592px;text-align:center;font-weight:bold;white-space:pre">Where Design Meets</div><div class="a t" style="left:1158.00px;top:390.18px;font-size:48.5px;color:#cfd5f7;width:592px;text-align:center;font-weight:bold;white-space:pre">Dev in Real-Time</div><svg class="a" style="left:1339.5px;top:388.5px;overflow:visible" width="14" height="14" fill="none" stroke="#2ad3a0" stroke-width="2.7" stroke-linecap="round" stroke-linejoin="round"><path d="M7 1.5 V12.5 M2.2 4.2 L11.8 9.8 M11.8 4.2 L2.2 9.8"/></svg><div class="a t" style="left:1158.00px;top:471.00px;font-size:21.3px;color:#9a9cb0;width:592px;text-align:center;white-space:pre">Your all-in-one product studio that helps you plan, build,</div><div class="a t" style="left:1158.00px;top:501.40px;font-size:21.3px;color:#9a9cb0;width:592px;text-align:center;white-space:pre">and launch your app.</div><div class="a" style="left:1183.5px;top:567.3px;width:542.5px;height:236px;background:#1f1f2e;border:1.5px solid #30304a;border-radius:8px"></div><svg class="a" style="left:1207.5px;top:589.5px;overflow:visible" width="17" height="23" fill="none" stroke="#22d3a0" stroke-width="1.9" stroke-linecap="round" stroke-linejoin="round"><circle cx="8" cy="6.8" r="5.6"/><path d="M4.5 11.5 L3 21.5 L8 18.3 L13 21.5 L11.5 11.5"/></svg><div class="a t" style="left:1235.50px;top:591.21px;font-size:18.9px;color:#eceef8;font-weight:bold;white-space:pre">Welcome to the world of vibe coding</div><div class="a t" style="left:1226.00px;top:637.85px;font-size:19.4px;color:#a0a2b4;white-space:pre">Rapid MVP Prototyping</div><div class="a t" style="left:1226.00px;top:669.15px;font-size:19.4px;color:#a0a2b4;white-space:pre">Converting Figma Designs into</div><div class="a t" style="left:1226.00px;top:697.65px;font-size:19.4px;color:#a0a2b4;white-space:pre">Maintainable Source Code</div><div class="a t" style="left:1226.00px;top:730.15px;font-size:19.4px;color:#a0a2b4;white-space:pre">Building Dynamic Websites with Zero</div><div class="a t" style="left:1226.00px;top:757.75px;font-size:19.4px;color:#a0a2b4;white-space:pre">Backend Experience</div><div class="a" style="left:1209.5px;top:646.2px;width:6px;height:6px;border-radius:50%;background:#9a9cae"></div><div class="a" style="left:1209.5px;top:677.5px;width:6px;height:6px;border-radius:50%;background:#9a9cae"></div><div class="a" style="left:1209.5px;top:738.5px;width:6px;height:6px;border-radius:50%;background:#9a9cae"></div><svg class="a" style="left:1575px;top:635px" width="135" height="155" viewBox="0 0 1152 1323">
    <defs><radialGradient id="bag" cx="0.35" cy="0.55" r="0.7"><stop offset="0" stop-color="#4a7cc2"/><stop offset="0.6" stop-color="#3a68aa"/><stop offset="1" stop-color="#284e86"/></radialGradient>
    <radialGradient id="helm" cx="0.4" cy="0.3" r="0.8"><stop offset="0" stop-color="#e4e8f0"/><stop offset="1" stop-color="#8a90a0"/></radialGradient></defs>
    <path d="M540 95 L600 85 L605 125 L548 128Z" fill="#d030e0"/>
    <path d="M700 110 L730 85 L752 108Z" fill="#f0e030"/>
    <path d="M865 125 L905 118 L885 152Z" fill="#30d030"/>
    <path d="M712 215 Q760 110 830 195" stroke="#f08020" stroke-width="22" fill="none"/>
    <path d="M905 185 L1035 200 L1025 240 L910 225Z" fill="#ff30a0"/>
    <path d="M365 235 L425 240 L420 258 L368 250Z" fill="#ff30b0"/>
    <path d="M525 205 L580 200 L540 235Z" fill="#f0e030"/>
    <path d="M400 335 Q460 400 510 340 Q560 290 610 260 Q680 220 750 290" stroke="#20b8e0" stroke-width="24" fill="none"/>
    <path d="M795 300 L850 290 L812 335Z" fill="#30d030"/>
    <path d="M935 320 L970 305 L955 348Z" fill="#f0f030"/>
    <path d="M650 385 L740 392 L735 418 L652 410Z" fill="#ff2030"/>
    <path d="M795 455 L835 450 L832 482 L798 485Z" fill="#d030e0"/>
    <path d="M520 1250 C300 1250 100 1200 100 1050 C100 900 300 780 460 700 C560 640 620 500 780 480 C950 470 1050 650 1050 900 C1050 1150 900 1250 700 1255Z" fill="url(#bag)"/>
    <path d="M520 960 C700 900 900 850 1040 780 C1060 900 1050 1150 880 1230 C760 1260 600 1258 520 1250Z" fill="#2c5896" opacity=".6"/>
    <path d="M520 960 L515 1250" stroke="#24487e" stroke-width="6"/>
    <path d="M490 520 L510 450 L570 500Z M650 520 L715 470 L730 560Z" fill="#c8ccd8"/>
    <ellipse cx="590" cy="620" rx="175" ry="150" fill="url(#helm)"/>
    <path d="M430 640 C430 560 560 540 610 600 C640 650 620 720 540 735 C470 740 430 700 430 640Z" fill="#1c2030"/>
    <path d="M460 690 C500 700 560 700 600 670" stroke="#6a90b0" stroke-width="14" fill="none" opacity=".6"/>
    <circle cx="705" cy="660" r="52" fill="#2a2c34"/><circle cx="705" cy="660" r="32" fill="#8a6040"/><circle cx="715" cy="660" r="22" fill="#202228"/>
    <path d="M380 790 C420 740 600 740 640 790 L640 880 L390 880Z" fill="#b8bcc8"/>
    <path d="M195 655 L345 685 L385 850 L240 830Z" fill="#dcc8c8"/>
    <path d="M250 720 L320 735 M255 760 L330 780" stroke="#f4f4f8" stroke-width="10" opacity=".8"/>
    <ellipse cx="265" cy="880" rx="48" ry="55" fill="#2a2e38"/><ellipse cx="250" cy="880" rx="25" ry="45" fill="#d8dce4"/>
    <ellipse cx="380" cy="915" rx="50" ry="58" fill="#2a2e38"/><ellipse cx="362" cy="915" rx="26" ry="48" fill="#d8dce4"/>
    <path d="M290 830 L540 850 L560 900 L320 940Z" fill="#3a3e4a"/>
    </svg><div class="a" style="left:1185.3px;top:1051px;width:538.4px;height:211px;background:#2f2f44;border:1.5px solid #3e3e58;border-radius:12px"></div><svg class="a" style="left:1206px;top:1071px;overflow:visible" width="25" height="25" fill="none" stroke="#d2d2d8" stroke-width="2" stroke-linecap="round" stroke-linejoin="round"><circle cx="12.3" cy="11.8" r="4.3"/><path d="M16.6 8 V13.5 Q16.6 16.3 19.5 16.3 Q22.6 16.3 22.6 12 A10.6 10.6 0 1 0 17.5 21.2"/></svg><svg class="a" style="left:1254px;top:1073px;overflow:visible" width="22" height="22" fill="none" stroke="#d2d2d8" stroke-width="1.9" stroke-linecap="round" stroke-linejoin="round"><path d="M10.5 1.2 V19.6 M1 10.3 H20"/></svg><svg class="a" style="left:1296.5px;top:1072px;overflow:visible" width="24" height="24" fill="none" stroke="#d2d2d8" stroke-width="1.6" stroke-linecap="round" stroke-linejoin="round"><path d="M2.5 1.5 V4.5 M6.5 1.5 V4.5 M1.2 4.5 H7.8 V7.5 Q7.8 10.5 4.5 10.5 Q1.2 10.5 1.2 7.5Z M4.5 10.5 V17.5 Q4.5 21 7.7 21 Q10.8 21 10.8 17.5 V5.5 Q10.8 1.8 14 1.8 Q17.2 1.8 17.2 5.5 V12"/><path d="M14 12.5 H20.4 V15.5 Q20.4 18.3 17.2 18.3 Q14 18.3 14 15.5Z M15.5 18.3 V21.5 M19 18.3 V21.5"/></svg><div class="a t" style="left:1204.80px;top:1114.83px;font-size:18.45px;color:#7e8094;width:494px;overflow:hidden;white-space:nowrap">Please enter a question, or enter "/" to use shortcut commands</div><div class="a" style="left:1197px;top:1208px;width:103px;height:38px;background:#3e3e53;border-radius:6px"></div><div class="a" style="left:1197px;top:1208px;width:51px;height:38px;background:#6a4ce6;border-radius:6px"></div><svg class="a" style="left:1212px;top:1216px;overflow:visible" width="26" height="25" fill="none" stroke="#ffffff" stroke-width="1.8" stroke-linecap="round" stroke-linejoin="round"><path d="M2.5 1.8 H21.5 Q23 1.8 23 3.3 V16.5 Q23 18 21.5 18 H7.5 L2.5 22 V3.3 Q2.5 1.8 4 1.8Z"/><path d="M10.5 7 L7.8 10 L10.5 13 M15 7 L17.7 10 L15 13" stroke-width="1.6"/></svg><svg class="a" style="left:1262px;top:1216px;overflow:visible" width="26" height="25" fill="none" stroke="#c8cce6" stroke-width="1.8" stroke-linecap="round" stroke-linejoin="round"><path d="M2.5 1.8 H21.5 Q23 1.8 23 3.3 V16.5 Q23 18 21.5 18 H7.5 L2.5 22 V3.3 Q2.5 1.8 4 1.8Z"/><path d="M8.3 9.5 H8.8 M12.5 9.5 H13 M16.7 9.5 H17.2" stroke-width="1.9"/></svg><div class="a" style="left:1312.7px;top:1208px;width:222.6px;height:38px;background:#3e3e53;border-radius:6px"></div><svg class="a" style="left:1319.5px;top:1216.5px" width="21" height="21"><g stroke="#e8774a" stroke-width="2" stroke-linecap="round"><path d="M10.5 1 V20 M1 10.5 H20 M3.8 3.8 L17.2 17.2 M17.2 3.8 L3.8 17.2 M6.5 1.8 L14.5 19.2 M14.5 1.8 L6.5 19.2 M1.8 6.5 L19.2 14.5 M1.8 14.5 L19.2 6.5"/></g></svg><div class="a t" style="left:1347.50px;top:1216.52px;font-size:19px;color:#e0e0ea;white-space:pre">Claude-4.0-Sonnet</div><svg class="a" style="left:1513px;top:1222.5px;overflow:visible" width="13" height="9" fill="none" stroke="#6c6e82" stroke-width="1.6" stroke-linecap="round" stroke-linejoin="round"><path d="M1 1.5 L6.5 7 L12 1.5"/></svg><div class="a" style="left:1615px;top:1208px;width:38px;height:38px;background:#3a3a4d;border-radius:6px"></div><svg class="a" style="left:1621px;top:1214px;overflow:visible" width="26" height="26" fill="none" stroke="#9a9cb2" stroke-width="1.6" stroke-linecap="round" stroke-linejoin="round"><path d="M11 4 Q11.8 12.5 20 13.5 Q11.8 14.5 11 23 Q10.2 14.5 2 13.5 Q10.2 12.5 11 4Z"/><path d="M20 3 V8.5 M17.2 5.8 H22.8 M3 21.5 H3.5" stroke-width="1.4"/></svg><div class="a" style="left:1665.7px;top:1208px;width:38px;height:38px;background:#1e9570;border-radius:6px"></div><svg class="a" style="left:1670px;top:1213px;overflow:visible" width="30" height="28" fill="none" stroke="#ffffff" stroke-width="2" stroke-linecap="round" stroke-linejoin="round"><path d="M14.8 2.5 L25 24.5 L14.8 19.5 L4.6 24.5Z M14.8 2.5 V19.5"/></svg><div class="a" style="left:0;top:1290px;width:1750px;height:33px;background:#11111a"></div><div class="a" style="left:0;top:1291px;width:54px;height:32px;background:#252628"></div><svg class="a" style="left:18px;top:1295px;overflow:visible" width="18" height="22" fill="none" stroke="#c2c6e2" stroke-width="1.9" stroke-linecap="round" stroke-linejoin="round"><path d="M2.5 7.5 L9 13.8 L2.5 20 M15.8 2 L9.5 8 L15.8 14"/></svg><svg class="a" style="left:67px;top:1296px;overflow:visible" width="22" height="22" fill="none" stroke="#c2c6e2" stroke-width="1.9" stroke-linecap="round" stroke-linejoin="round"><circle cx="10.8" cy="10.8" r="9.3"/><path d="M7.3 7.3 L14.3 14.3 M14.3 7.3 L7.3 14.3"/></svg><div class="a t" style="left:93.50px;top:1296.56px;font-size:19.5px;color:#c2c6e2;">0</div><svg class="a" style="left:110.5px;top:1296px;overflow:visible" width="22" height="20" fill="none" stroke="#c2c6e2" stroke-width="1.9" stroke-linecap="round" stroke-linejoin="round"><path d="M10.8 1.5 L20.5 18.5 H1.2Z"/><path d="M10.8 7 V12.5 M10.8 15 V15.3" stroke-width="2.1"/></svg><div class="a t" style="left:136.50px;top:1296.56px;font-size:19.5px;color:#c2c6e2;">0</div><svg class="a" style="left:1707px;top:1296px;overflow:visible" width="19" height="22" fill="none" stroke="#c2c6e2" stroke-width="1.9" stroke-linecap="round" stroke-linejoin="round"><path d="M1.2 17.5 H17.8 L16 12 V8.5 A6.5 6.5 0 0 0 3 8.5 V12Z"/><path d="M7 19.2 Q9.5 22 12 19.2"/></svg></div></div></body></html>
